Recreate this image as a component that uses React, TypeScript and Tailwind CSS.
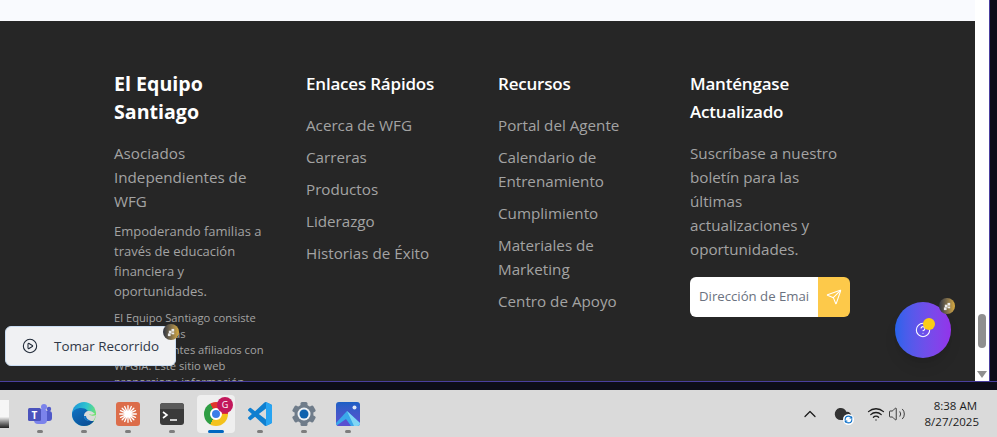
import { CirclePlay, CircleHelp, Send, ChevronUp, Wifi, Volume2, Cloud, RefreshCw } from 'lucide-react';

const font = "font-['Open_Sans','Noto_Sans',sans-serif]";

function Sparkle({ className }: { className: string }) {
  return (
    <div className={`absolute flex h-4 w-4 items-center justify-center rounded-full bg-gradient-to-r from-[#2f3440] to-[#d9ab3c] ${className}`}>
      <svg viewBox="0 0 10 10" className="h-[9px] w-[9px]" fill="#ececec">
        <rect x="5" y="1" width="3" height="3" />
        <rect x="2" y="3" width="3" height="3" />
        <rect x="5" y="5" width="3" height="2" />
        <rect x="1" y="6" width="3" height="3" />
      </svg>
    </div>
  );
}

function TaskIcon({ children }: { children: React.ReactNode }) {
  return (
    <div className="relative flex h-[38px] w-6 flex-col items-center justify-center">
      {children}
      <div className="absolute bottom-0 h-[3px] w-[6px] rounded-full bg-[#7d7d7d]" />
    </div>
  );
}

function Taskbar() {
  return (
    <div className={`flex h-[47px] shrink-0 items-center bg-[#dadada] ${font}`}>
      <div className="relative flex h-full w-full items-center">
        <div className="h-[28px] w-[9px] bg-gradient-to-b from-[#f6f6f6] from-60% to-[#222]" />
        {/* app icons */}
        <div className="ml-[19px] flex items-center gap-[20px]">
          <TaskIcon>
            <svg viewBox="0 0 24 24" className="h-6 w-6">
              <circle cx="16" cy="5" r="3" fill="#7b83eb" />
              <circle cx="21" cy="7" r="2.2" fill="#5059c9" />
              <rect x="14" y="9" width="10" height="10" rx="3" fill="#5059c9" />
              <rect x="6" y="7" width="13" height="15" rx="4" fill="#7b83eb" />
              <rect x="0" y="6" width="13" height="13" rx="1.5" fill="#4b53bc" />
              <text x="6.5" y="16.500" textAnchor="middle" fontSize="10" fontWeight="700" fill="#fff">T</text>
            </svg>
          </TaskIcon>
          <TaskIcon>
            <svg viewBox="0 0 24 24" className="h-6 w-6">
              <defs>
                <linearGradient id="edgeTop" x1="0" y1="0.2" x2="1" y2="0.5">
                  <stop offset="0" stopColor="#1c94d8" />
                  <stop offset="0.55" stopColor="#2fc4cf" />
                  <stop offset="1" stopColor="#6fe36d" />
                </linearGradient>
                <linearGradient id="edgeLow" x1="0" y1="0" x2="0.7" y2="1">
                  <stop offset="0" stopColor="#0f73c4" />
                  <stop offset="1" stopColor="#0b4f96" />
                </linearGradient>
              </defs>
              <circle cx="12" cy="12" r="12" fill="url(#edgeTop)" />
              <path d="M0 12C1 8 5 6 9 6c5 0 8 3 8 6 0 1-1 2-3 2-1 2 1 5 5 5h3c-2 3-6 5-10 5C5 24 0 18 0 12z" fill="url(#edgeLow)" />
              <path d="M12 14c0-3 2-5 5-5 3 0 5 2 7 4-1 3-2 5-3 6h-2c-4 0-7-2-7-5z" fill="#dadada" />
              <path d="M14 14c0 2 2 4 5 5h-1c-4 0-6-2-6-5z" fill="#0f73c4" />
              <path d="M17 12c2 1 5 1 7-1v2c-2 1-6 1-7-1z" fill="#6fe36d" />
            </svg>
          </TaskIcon>
          <TaskIcon>
            <div className="flex h-6 w-6 items-center justify-center rounded-[3px] bg-[#dc6d4a]">
              <svg viewBox="0 0 24 24" className="h-5 w-5" stroke="#fff" strokeWidth="1.6" strokeLinecap="round">
                <path d="M12 2v20M2 12h20M5 5l14 14M19 5L5 19M8 3l8 18M16 3L8 21M3 8l18 8M21 8L3 16" />
              </svg>
            </div>
          </TaskIcon>
          <TaskIcon>
            <div className="flex h-[22px] w-6 flex-col overflow-hidden rounded-[3px] bg-[#3a3a3a]">
              <div className="h-[6px] w-full bg-[#5a5a5a]" />
              <svg viewBox="0 0 24 16" className="h-4 w-6" fill="none" stroke="#fff" strokeWidth="1.6">
                <path d="M3 3l4 3-4 3M10 11h7" />
              </svg>
            </div>
          </TaskIcon>
          {/* chrome is the active app */}
          <div className="relative -mx-[7px] flex h-[38px] w-[38px] flex-col items-center justify-center rounded-[4px] bg-[#efefef]">
            <div className="relative h-6 w-6 rounded-full bg-[conic-gradient(#e0362c_0deg_90deg,#f4c21c_90deg_210deg,#2f9e44_210deg_330deg,#e0362c_330deg_360deg)]">
              <div className="absolute left-[6px] top-[6px] h-3 w-3 rounded-full border-2 border-white bg-[#3b7de8]" />
            </div>
            <div className="absolute right-[2px] top-[2px] flex h-4 w-4 items-center justify-center rounded-full bg-[#c2185b] text-[9px] text-white">G</div>
            <div className="absolute bottom-0 h-[3px] w-4 rounded-full bg-[#0067c0]" />
          </div>
          <TaskIcon>
            <svg viewBox="0 0 24 24" className="h-6 w-6">
              <path d="M23.15 2.587L18.21.21a1.494 1.494 0 0 0-1.705.29l-9.46 8.63-4.12-3.128a.999.999 0 0 0-1.276.057L.327 7.261A1 1 0 0 0 .326 8.74L3.899 12 .326 15.26a1 1 0 0 0 .001 1.479L1.65 17.94a.999.999 0 0 0 1.276.057l4.12-3.128 9.46 8.63a1.492 1.492 0 0 0 1.704.29l4.942-2.377A1.5 1.5 0 0 0 24 20.06V3.939a1.5 1.5 0 0 0-.85-1.352zm-5.146 14.861L10.826 12l7.178-5.448v10.896z" fill="#0f7fd0" />
              <path d="M18.004.1l5.146 2.487A1.5 1.5 0 0 1 24 3.939V20.06a1.5 1.5 0 0 1-.85 1.352L18.004 23.9z" fill="#27a4f2" />
            </svg>
          </TaskIcon>
          <TaskIcon>
            <svg viewBox="0 0 24 24" className="h-6 w-6">
              <circle cx="12" cy="12" r="9.500" fill="#6f7c8a" />
              <g fill="#6f7c8a">
                <rect x="8.500" y="0" width="7" height="5" rx="1.500" />
                <rect x="8.500" y="19" width="7" height="5" rx="1.500" />
                <rect x="8.500" y="0" width="7" height="5" rx="1.500" transform="rotate(60 12 12)" />
                <rect x="8.500" y="0" width="7" height="5" rx="1.500" transform="rotate(120 12 12)" />
                <rect x="8.500" y="0" width="7" height="5" rx="1.500" transform="rotate(240 12 12)" />
                <rect x="8.500" y="0" width="7" height="5" rx="1.500" transform="rotate(300 12 12)" />
              </g>
              <circle cx="12" cy="12" r="6.500" fill="#eef1f4" />
              <circle cx="12" cy="12" r="4.500" fill="#0f62ae" />
            </svg>
          </TaskIcon>
          <TaskIcon>
            <div className="relative h-6 w-6 overflow-hidden rounded-[3px] bg-gradient-to-b from-[#1a5fc4] to-[#5a4fd0]">
              <svg viewBox="0 0 24 24" className="h-6 w-6">
                <circle cx="18.500" cy="5.500" r="2" fill="#dfe9f7" />
                <path d="M0 21L11 9l13 12v3H0z" fill="#3aa8ea" />
                <path d="M11 9l13 12v3h-6z" fill="#7fd6f5" />
                <path d="M0 24l10-7 5 7z" fill="#5a4fd0" />
              </svg>
            </div>
          </TaskIcon>
        </div>

        {/* tray */}
        <div className="ml-auto flex items-center text-[#1c1c1c]">
          <ChevronUp className="mr-[14px] h-5 w-5" strokeWidth={1.5} />
          <div className="relative mr-[15px] h-[18px] w-[18px]">
            <Cloud className="h-[18px] w-[18px] fill-[#333] text-[#333]" />
            <RefreshCw className="absolute -bottom-[2px] -right-[2px] h-[11px] w-[11px] rounded-full bg-white p-[1px] text-[#0b6fc8]" strokeWidth={3} />
          </div>
          <Wifi className="mr-[3px] h-[18px] w-[18px]" strokeWidth={1.7} />
          <Volume2 className="mr-[19px] h-[18px] w-[18px]" strokeWidth={1.1} />
          <div className="mr-[18px] flex flex-col items-end text-[11.5px] leading-[16px]">
            <span className="pr-[2px]">8:38 AM</span>
            <span>8/27/2025</span>
          </div>
        </div>
      </div>
    </div>
  );
}

const quickLinks = ['Acerca de WFG', 'Carreras', 'Productos', 'Liderazgo', 'Historias de Éxito'];
const resources = ['Portal del Agente', 'Calendario de Entrenamiento', 'Cumplimiento', 'Materiales de Marketing', 'Centro de Apoyo'];

function LinkColumn({ title, links }: { title: string; links: string[] }) {
  return (
    <div className="w-[192px] pr-[24px]">
      <h3 className="mb-[15px] text-[17px] font-semibold leading-[28px] tracking-[-0.2px] text-white">{title}</h3>
      <ul className="flex flex-col gap-[8px] text-[15.2px] leading-[24px] text-[#a3a3a3]">
        {links.map((l) => (
          <li key={l}>{l}</li>
        ))}
      </ul>
    </div>
  );
}

export default function App() {
  return (
    <div className={`flex h-[437px] w-[997px] flex-col overflow-hidden bg-[#0d0d18] ${font}`}>
      <div className="flex h-[390px] shrink-0 flex-col">
        <div className="flex h-[382px] shrink-0 border-b border-[#4a3f9e]">
          <main className="relative h-full w-[975px] shrink-0 overflow-hidden bg-[#f9fafe]">
            <footer className="mt-[21px] h-[400px] bg-[#262626] pl-[114px] pt-[49px]">
              <div className="flex">
                <div className="w-[192px] pr-[40px]">
                  <h2 className="mb-[15px] text-[19.6px] font-bold leading-[28px] text-white">El Equipo Santiago</h2>
                  <p className="mb-[8px] text-[15.2px] leading-[24px] text-[#a3a3a3]">Asociados Independientes de WFG</p>
                  <p className="mb-[9px] text-[13px] leading-[20px] text-[#a3a3a3]">Empoderando familias a través de educación financiera y oportunidades.</p>
                  <p className="text-[11.2px] leading-[16px] text-[#a3a3a3]">El Equipo Santiago consiste de financistas independientes afiliados con WFGIA. Este sitio web proporciona información educativa.</p>
                </div>
                <LinkColumn title="Enlaces Rápidos" links={quickLinks} />
                <LinkColumn title="Recursos" links={resources} />
                <div className="w-[160px]">
                  <h3 className="mb-[15px] text-[17px] font-semibold leading-[28px] tracking-[-0.2px] text-white">Manténgase<br />Actualizado</h3>
                  <p className="mb-[16px] pr-[10px] text-[15.2px] leading-[24px] text-[#a3a3a3]">Suscríbase a nuestro boletín para las últimas actualizaciones y oportunidades.</p>
                  <div className="flex h-[40px] w-[160px] overflow-hidden rounded-[6px]">
                    <input readOnly placeholder="Dirección de Email" className="w-[128px] bg-white px-[9px] text-[13.2px] text-[#6b7280] placeholder:text-[#6b7280] outline-none" />
                    <button className="flex w-[32px] items-center justify-center bg-[#fdc94a]">
                      <Send className="h-4 w-4 text-white" strokeWidth={1.6} />
                    </button>
                  </div>
                </div>
              </div>
            </footer>

            {/* floating tour button */}
            <button className="absolute left-[5px] top-[326px] flex h-[40px] w-[171px] items-center rounded-[6px] border border-[#c9dcf2] bg-[#f0f1f3] pl-[16px] text-[13.400px] font-medium text-[#2f3747]">
              <CirclePlay className="mr-[16px] h-4 w-4 text-[#1f2937]" strokeWidth={1.6} />
              Tomar Recorrido
              <Sparkle className="-right-[4px] -top-[3px]" />
            </button>

            {/* help button */}
            <div className="absolute left-[895px] top-[302px] h-[56px] w-[56px] rounded-full bg-gradient-to-r from-[#2563eb] to-[#9333ea] shadow-lg">
              <div className="flex h-full w-full items-center justify-center">
                <CircleHelp className="h-4 w-4 text-white" strokeWidth={1.6} />
              </div>
              <div className="absolute left-[28px] top-[16px] h-3 w-3 rounded-full bg-[#facc15]" />
              <Sparkle className="-right-[4px] -top-[4px]" />
            </div>
          </main>

          {/* browser scrollbar */}
          <div className="relative w-[14px] shrink-0 bg-white">
            <div className="absolute bottom-[33px] left-[3px] h-[34px] w-[8px] rounded-full bg-[#8f8f8f]" />
            <div className="absolute bottom-[3px] left-[2px] h-0 w-0 border-x-[5px] border-t-[7px] border-x-transparent border-t-[#8f8f8f]" />
          </div>
          <div className="w-px bg-[#4a3f9e]" />
        </div>
      </div>
      <Taskbar />
    </div>
  );
}
